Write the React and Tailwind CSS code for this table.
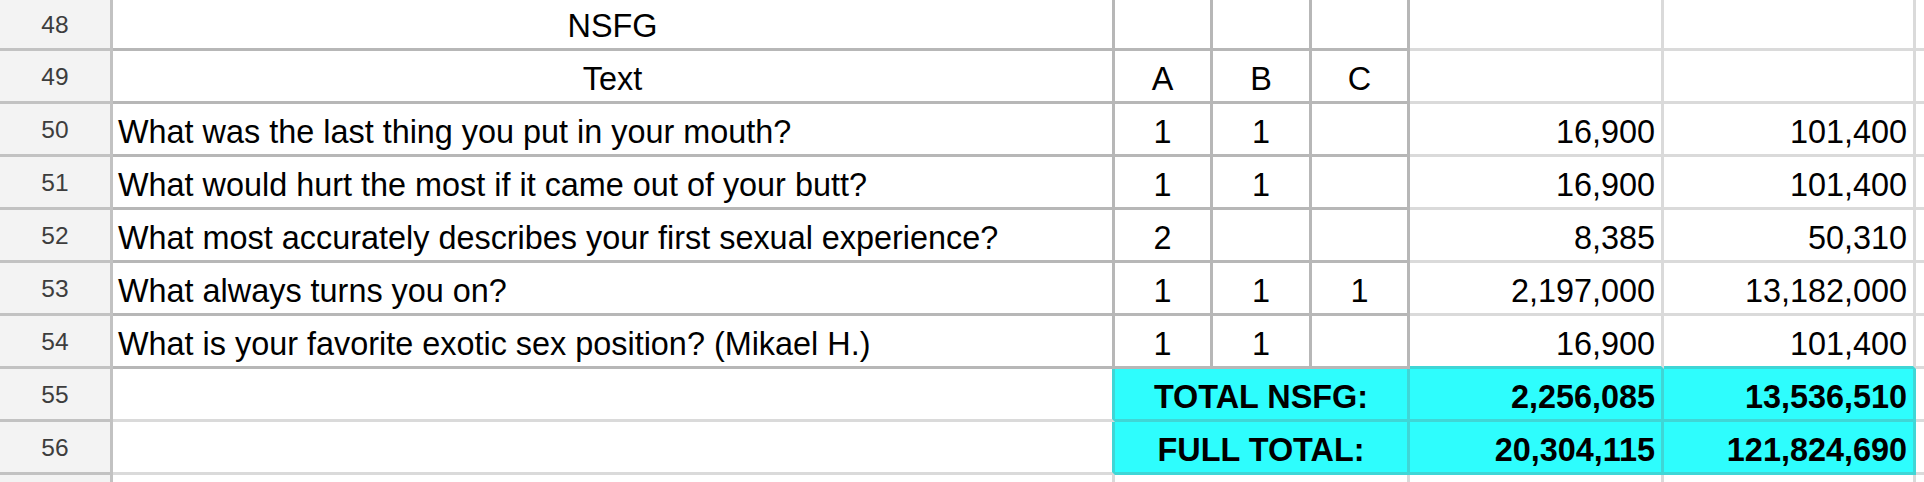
import React from 'react';

const rows = [
    { n: 48, text: 'NSFG', center: true },
    { n: 49, text: 'Text', center: true, a: 'A', b: 'B', c: 'C' },
    { n: 50, text: 'What was the last thing you put in your mouth?', a: '1', b: '1', d: '16,900', e: '101,400' },
    { n: 51, text: 'What would hurt the most if it came out of your butt?', a: '1', b: '1', d: '16,900', e: '101,400' },
    { n: 52, text: 'What most accurately describes your first sexual experience?', a: '2', d: '8,385', e: '50,310' },
    { n: 53, text: 'What always turns you on?', a: '1', b: '1', c: '1', d: '2,197,000', e: '13,182,000' },
    { n: 54, text: 'What is your favorite exotic sex position? (Mikael H.)', a: '1', b: '1', d: '16,900', e: '101,400', last: true },
];

const totals = [
    { n: 55, label: 'TOTAL NSFG:', d: '2,256,085', e: '13,536,510' },
    { n: 56, label: 'FULL TOTAL:', d: '20,304,115', e: '121,824,690' },
];

const RowNum = ({ n }) => (
    <div className="w-[113px] shrink-0 bg-[#f3f3f3] border-r-[3px] border-b-[3px] border-[#c2c2c2] flex items-center justify-center pt-[2px] text-[24.5px] text-[#3d3d3d]">
        {n}
    </div>
);

const App = () => {
    return (
        <div className="w-[1924px] h-[482px] overflow-hidden bg-white text-black font-['Liberation_Sans',Arial,sans-serif]">
            {rows.map((r, i) => (
                <div key={r.n} className={i === 0 ? 'flex h-[51px]' : 'flex h-[53px]'}>
                    <RowNum n={r.n} />
                    <div
                        className={
                            r.center
                                ? 'w-[1002px] shrink-0 border-r-[3px] border-b-[3px] border-[#b7b7b7] flex items-end justify-center pb-[5px] text-[32.4px] leading-[34px]'
                                : 'w-[1002px] shrink-0 border-r-[3px] border-b-[3px] border-[#b7b7b7] flex items-end px-[5px] pb-[5px] text-[32.4px] leading-[34px]'
                        }
                    >
                        {r.text}
                    </div>
                    <div className="w-[98px] shrink-0 border-r-[3px] border-b-[3px] border-[#b7b7b7] flex items-end justify-center pb-[5px] text-[32.4px] leading-[34px]">
                        {r.a}
                    </div>
                    <div className="w-[99px] shrink-0 border-r-[3px] border-b-[3px] border-[#b7b7b7] flex items-end justify-center pb-[5px] text-[32.4px] leading-[34px]">
                        {r.b}
                    </div>
                    <div className="w-[98px] shrink-0 border-r-[3px] border-b-[3px] border-[#b7b7b7] flex items-end justify-center pb-[5px] text-[32.4px] leading-[34px]">
                        {r.c}
                    </div>
                    <div
                        className={
                            r.last
                                ? 'w-[254px] shrink-0 border-r-[3px] border-b-[3px] border-r-[#dadada] border-b-[#3fd6d6] flex items-end justify-end pr-[6px] pb-[5px] text-[32.4px] leading-[34px]'
                                : 'w-[254px] shrink-0 border-r-[3px] border-b-[3px] border-[#dadada] flex items-end justify-end pr-[6px] pb-[5px] text-[32.4px] leading-[34px]'
                        }
                    >
                        {r.d}
                    </div>
                    <div
                        className={
                            r.last
                                ? 'w-[252px] shrink-0 border-r-[3px] border-b-[3px] border-r-[#dadada] border-b-[#3fd6d6] flex items-end justify-end pr-[6px] pb-[5px] text-[32.4px] leading-[34px]'
                                : 'w-[252px] shrink-0 border-r-[3px] border-b-[3px] border-[#dadada] flex items-end justify-end pr-[6px] pb-[5px] text-[32.4px] leading-[34px]'
                        }
                    >
                        {r.e}
                    </div>
                    <div className="flex-1 border-b-[3px] border-[#dadada]" />
                </div>
            ))}

            {totals.map((t) => (
                <div key={t.n} className="flex h-[53px]">
                    <RowNum n={t.n} />
                    <div className="w-[1002px] shrink-0 border-r-[3px] border-b-[3px] border-r-[#3fd6d6] border-b-[#dadada]" />
                    <div className="w-[295px] shrink-0 bg-[#2efdfd] border-r-[3px] border-b-[3px] border-[#3fd6d6] flex items-end justify-center pb-[5px] text-[32.4px] leading-[34px] font-bold">
                        {t.label}
                    </div>
                    <div className="w-[254px] shrink-0 bg-[#2efdfd] border-r-[3px] border-b-[3px] border-[#3fd6d6] flex items-end justify-end pr-[6px] pb-[5px] text-[32.4px] leading-[34px] font-bold">
                        {t.d}
                    </div>
                    <div className="w-[252px] shrink-0 bg-[#2efdfd] border-r-[3px] border-b-[3px] border-[#3fd6d6] flex items-end justify-end pr-[6px] pb-[5px] text-[32.4px] leading-[34px] font-bold">
                        {t.e}
                    </div>
                    <div className="flex-1 border-b-[3px] border-[#dadada]" />
                </div>
            ))}

            <div className="flex h-[7px]">
                <div className="w-[113px] shrink-0 bg-[#f3f3f3] border-r-[3px] border-[#c2c2c2]" />
                <div className="w-[1002px] shrink-0 border-r-[3px] border-[#dadada]" />
                <div className="w-[295px] shrink-0 border-r-[3px] border-[#dadada]" />
                <div className="w-[254px] shrink-0 border-r-[3px] border-[#dadada]" />
                <div className="w-[252px] shrink-0 border-r-[3px] border-[#dadada]" />
            </div>
        </div>
    );
};

export default App;
